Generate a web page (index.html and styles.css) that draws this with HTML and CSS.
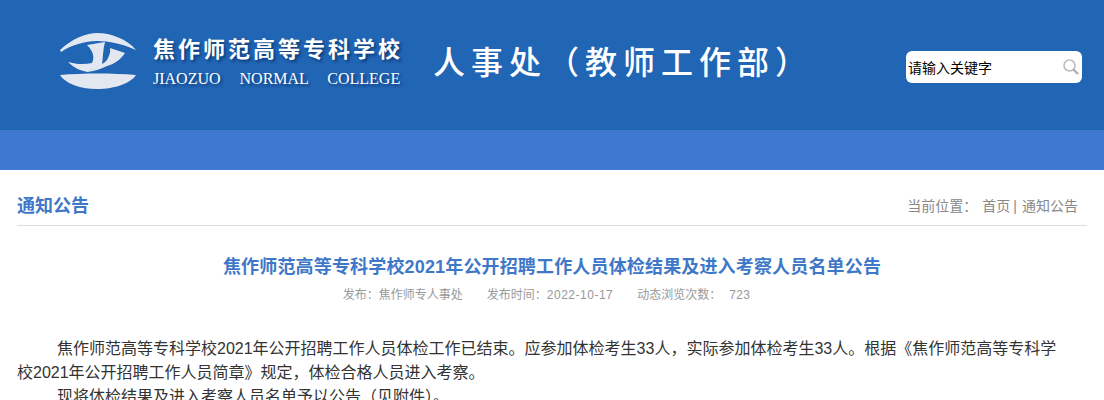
FILE: index.html
```html
<!DOCTYPE html>
<html lang="zh-CN">
<head>
    <meta charset="utf-8">
    <title>焦作师范高等专科学校2021年公开招聘工作人员体检结果及进入考察人员名单公告</title>
    <link rel="stylesheet" href="styles.css">
</head>
<body>
    <div class="header">
        <div class="logo">
            <svg class="logo-mark" width="78" height="58" viewBox="0 0 78 58">
                <g fill="#e3e8f0">
                    <path d="M1 17 C14 5 28 0 38 0 C52 0 68 6 77 17 C64 11 50 8 38 8 C26 8 12 12 2 19 Z"/>
                    <path d="M1 42 C26 40 52 40 77 42 C72 50 56 56 38 56 C20 56 6 50 1 42 Z"/>
                    <path d="M28 12 L46 9 C44 16 44 24 43 32 L29 39 C22 38 15 35 9 29 C16 31 25 32 33 30 C36 24 34 18 28 12 Z"/>
                    <path d="M51 15 L66 20 C62 26 56 31 48 33 C42 36 36 38 29 39 C38 34 46 30 48 27 C50 23 52 19 51 15 Z"/>
                </g>
            </svg>
            <div class="logo-text">
                <div class="logo-cn">焦作师范高等专科学校</div>
                <div class="logo-en">JIAOZUO NORMAL COLLEGE</div>
            </div>
        </div>
        <div class="dept">人事处（教师工作部）</div>
        <div class="search">
            <span>请输入关键字</span>
            <svg width="18" height="18" viewBox="0 0 18 18">
                <circle cx="7.5" cy="7.5" r="5.5" fill="none" stroke="#bbb" stroke-width="1.5"/>
                <path d="M11.5 11.5 L16 16" stroke="#aaa" stroke-width="2.2"/>
            </svg>
        </div>
    </div>

    <div class="nav"></div>

    <div class="main">
        <div class="crumb-bar">
            <h2>通知公告</h2>
            <div class="crumbs">当前位置：<a class="first">首页</a><i>|</i><a>通知公告</a></div>
        </div>

        <h1>焦作师范高等专科学校2021年公开招聘工作人员体检结果及进入考察人员名单公告</h1>
        <div class="meta">
            <span>发布：焦作师专人事处</span>
            <span>发布时间：<em>2022-10-17</em></span>
            <span>动态浏览次数：<b>723</b></span>
        </div>

        <div class="article">
            <p>焦作师范高等专科学校2021年公开招聘工作人员体检工作已结束。应参加体检考生33人，实际参加体检考生33人。根据《焦作师范高等专科学校2021年公开招聘工作人员简章》规定，体检合格人员进入考察。</p>
            <p>现将体检结果及进入考察人员名单予以公告（见附件）。</p>
        </div>
    </div>
</body>
</html>
```

FILE: styles.css
```css
html, body {
    height: 400px;
    overflow: hidden;
}

body {
    margin: 0;
    background-color: #fff;
    font-family: "Liberation Sans", "Noto Sans CJK SC", sans-serif;
    color: #333;
}

.header {
    height: 130px;
    display: flex;
    align-items: center;
    background-color: #2165b5;
    padding-left: 59px;
    box-sizing: border-box;
}

.logo {
    display: flex;
    align-items: flex-start;
    gap: 16px;
    width: 374px;
    height: 60px;
}

.logo-mark {
    margin-top: -2px;
    filter: blur(0.6px);
}

.logo-cn {
    font-size: 22px;
    font-weight: 700;
    line-height: 30px;
    letter-spacing: 3px;
    color: #fff;
    text-shadow: 2px 2px 3px #0d3a75;
    white-space: nowrap;
}

.logo-en {
    margin-top: 4px;
    font-family: "Liberation Serif", serif;
    font-size: 16px;
    line-height: 20px;
    word-spacing: 15px;
    color: #fff;
    text-shadow: 2px 2px 3px #0d3a75;
    white-space: nowrap;
}

.dept {
    width: 473px;
    margin-bottom: 10px;
    font-size: 32px;
    font-weight: 500;
    letter-spacing: 6px;
    color: #fff;
    white-space: nowrap;
}

.search {
    width: 176px;
    height: 32px;
    margin-top: 4px;
    display: flex;
    align-items: center;
    justify-content: space-between;
    padding: 0 2px 1px;
    box-sizing: border-box;
    background-color: #fff;
    border-radius: 6px;
    font-size: 14px;
    color: #000;
}

.nav {
    height: 40px;
    background-color: #3f78d1;
}

.main {
    margin: 0 17px;
}

.crumb-bar {
    height: 56px;
    display: flex;
    align-items: flex-end;
    justify-content: space-between;
    padding: 0 9px 6px 0;
    border-bottom: 1px solid #ddd;
    box-sizing: border-box;
}

.crumb-bar h2 {
    margin: 0;
    font-size: 18px;
    line-height: 26px;
    font-weight: 700;
    color: #3f78c8;
}

.crumbs {
    font-size: 14px;
    line-height: 26px;
    color: #888;
}

.crumbs .first {
    margin-left: 5px;
}

.crumbs i {
    font-style: normal;
    margin: 0 5px 0 3px;
}

h1 {
    margin: 29px 0 0;
    font-size: 18px;
    line-height: 24px;
    font-weight: 700;
    letter-spacing: 0.16px;
    text-align: center;
    color: #3f78c8;
}

.meta {
    display: flex;
    justify-content: center;
    gap: 24px;
    margin-top: 6px;
    padding-right: 11px;
    line-height: 20px;
    font-size: 12px;
    color: #999;
}

.meta em {
    font-style: normal;
    letter-spacing: 0.5px;
}

.meta b {
    font-weight: 400;
    margin-left: 8px;
    letter-spacing: 0.3px;
}

.article {
    margin-top: 32px;
    padding-right: 20px;
    font-size: 16px;
    line-height: 24px;
    color: #333;
}

.article p {
    margin: 0;
    text-indent: 40px;
}
```
